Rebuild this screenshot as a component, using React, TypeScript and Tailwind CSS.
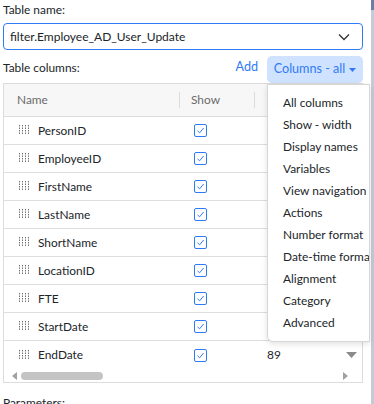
import React from "react";

const rows = ["PersonID", "EmployeeID", "FirstName", "LastName", "ShortName", "LocationID", "FTE", "StartDate", "EndDate"];
const menu = ["All columns", "Show - width", "Display names", "Variables", "View navigation", "Actions", "Number format", "Date-time format", "Alignment", "Category", "Advanced"];

function Handle() {
  const dots = [];
  for (let c = 0; c < 4; c++) for (let r = 0; r < 4; r++) dots.push(<rect key={c + "-" + r} x={c * 3} y={r * 2.5} width="1" height="1.4" fill="#6b6b6b" />);
  return <svg width="11" height="10" viewBox="0 0 11 10">{dots}</svg>;
}

function Check() {
  return (
    <div className="w-[13px] h-[13px] border border-[#2f7bf5] rounded-[2px] flex items-center justify-center bg-white">
      <svg width="9" height="9" viewBox="0 0 9 9"><path d="M1.5 4.8 L3.6 6.8 L7.6 2" stroke="#2f7bf5" strokeWidth="1" fill="none" /></svg>
    </div>
  );
}

export default function App() {
  return (
    <div className="relative w-[374px] h-[404px] overflow-hidden bg-white text-[11.9px] text-[#212529]" style={{ fontFamily: 'Lato, "Noto Sans", sans-serif' }}>
      <div className="absolute right-0 top-0 w-[3px] h-full bg-[#c3cbd9]" />
      <div className="absolute right-0 top-0 w-[3px] h-[10px] bg-[#6b7fa6]" />
      <div className="pl-[3px] w-[363px] flex flex-col">
        <div className="h-[23px] pt-[1px] leading-[18px]">Table name:</div>
        <div className="h-[27px] border border-[#2f7bf5] rounded-[4px] flex items-center justify-between pl-[6px] pr-[12px] text-[12px]">
          <span>filter.Employee_AD_User_Update</span>
          <svg width="12" height="8" viewBox="0 0 12 8"><path d="M1 1.5 L6 6.5 L11 1.5" stroke="#333" strokeWidth="1.3" fill="none" /></svg>
        </div>
        <div className="h-[33px] flex items-center justify-between">
          <span className="pt-[3px]">Table columns:</span>
          <div className="flex items-center self-end">
            <span className="text-[#2f7bf5] text-[12.6px] mr-[9px] pb-[5px]">Add</span>
            <div className="h-[27px] w-[96px] bg-[#cfe2ff] rounded-[5px] flex items-center justify-center text-[#2f7bf5] text-[12.6px] gap-[4px]">
              <span>Columns - all</span>
              <svg width="7" height="4" viewBox="0 0 7 4"><path d="M0 0 L7 0 L3.5 4 Z" fill="#2f7bf5" /></svg>
            </div>
          </div>
        </div>
        <div className="border border-[#dcdcdc] h-[300px] flex flex-col overflow-hidden">
          <div className="h-[33px] bg-[#f7f7f7] border-b border-[#dedede] flex items-center text-[#6b6b6b]">
            <div className="w-[176px] pl-[13px] border-r border-[#dcdcdc] h-[16px] flex items-center">Name</div>
            <div className="w-[75px] pl-[11px] border-r border-[#dcdcdc] h-[16px] flex items-center">Show</div>
            <div className="flex-1" />
          </div>
          {rows.map((r, i) => (
            <div key={r} className={"h-[28px] flex items-center " + (i < rows.length - 1 ? "border-b border-[#dedede]" : "")}>
              <div className="w-[176px] pl-[15px] flex items-center gap-[8px]">
                <Handle />
                <span>{r}</span>
              </div>
              <div className="w-[75px] pl-[14px] flex items-center"><Check /></div>
              <div className="flex-1 pl-[12px] flex items-center justify-between pr-[5px]">
                <span>89</span>
                {i === rows.length - 1 && (
                  <svg width="11" height="6" viewBox="0 0 11 6"><path d="M0 0 L11 0 L5.5 6 Z" fill="#8a8a8a" /></svg>
                )}
              </div>
            </div>
          ))}
          <div className="h-[13px] flex items-center px-[8px] gap-[4px]">
            <svg width="5" height="8" viewBox="0 0 5 8"><path d="M5 0 L5 8 L0 4 Z" fill="#a0a0a0" /></svg>
            <div className="w-[82px] h-[8px] rounded-full bg-[#c4c4c4]" />
            <div className="flex-1" />
            <svg width="5" height="8" viewBox="0 0 5 8" className="mr-[6px]"><path d="M0 0 L0 8 L5 4 Z" fill="#a0a0a0" /></svg>
          </div>
        </div>
        <div className="pt-[11px] leading-[18px]">Parameters:</div>
      </div>
      <div className="absolute left-[267px] top-[84px] w-[103px] h-[258px] bg-white border border-[#d6d6d6] rounded-bl-[6px] shadow-[0_2px_6px_rgba(0,0,0,0.12)] overflow-hidden pt-[7px]">
        {menu.map((m) => (
          <div key={m} className="h-[22px] pl-[15px] flex items-center whitespace-nowrap">{m}</div>
        ))}
      </div>
    </div>
  );
}
